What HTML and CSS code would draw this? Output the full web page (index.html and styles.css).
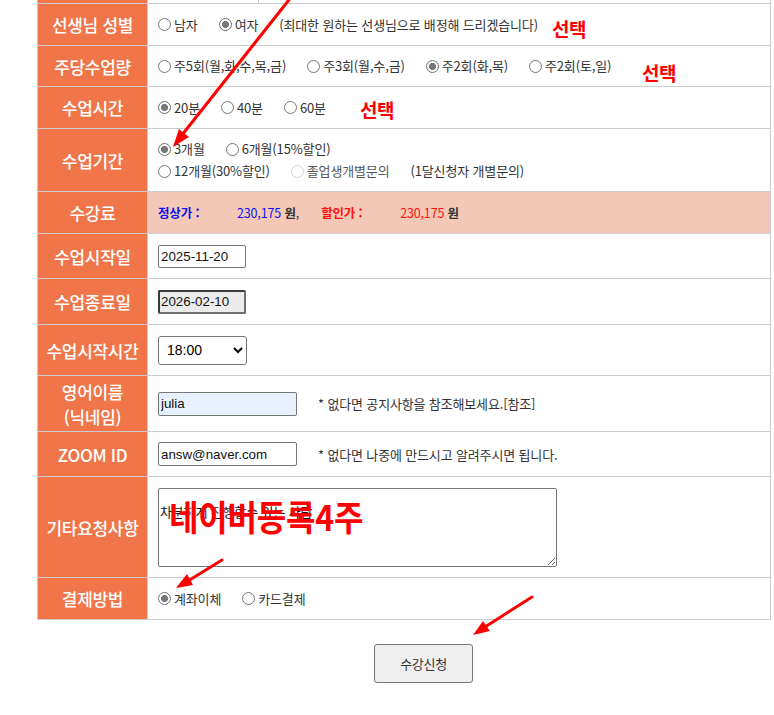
FILE: index.html
```html
<!DOCTYPE html>
<html lang="ko">
<head>
    <meta charset="UTF-8">
    <meta name="viewport" content="width=device-width, initial-scale=1.0">
    <title>수강신청</title>
    <link rel="stylesheet" href="styles.css">
</head>
<body>
    <div class="form-wrap">
        <table class="apply-table">
            <colgroup>
                <col class="col-label">
                <col>
            </colgroup>
            <tr class="row-prev">
                <th class="label"></th>
                <td class="value"><div class="prev-split"></div></td>
            </tr>
            <tr class="row-42">
                <th class="label">선생님 성별</th>
                <td class="value">
                    <div class="opts">
                        <label class="opt"><input type="radio" name="gender">남자</label>
                        <label class="opt"><input type="radio" name="gender" checked>여자</label>
                        <span>(최대한 원하는 선생님으로 배정해 드리겠습니다)</span>
                    </div>
                </td>
            </tr>
            <tr class="row-41">
                <th class="label">주당수업량</th>
                <td class="value">
                    <div class="opts">
                        <label class="opt"><input type="radio" name="week">주5회(월,화,수,목,금)</label>
                        <label class="opt"><input type="radio" name="week">주3회(월,수,금)</label>
                        <label class="opt"><input type="radio" name="week" checked>주2회(화,목)</label>
                        <label class="opt"><input type="radio" name="week">주2회(토,일)</label>
                    </div>
                </td>
            </tr>
            <tr class="row-42">
                <th class="label">수업시간</th>
                <td class="value">
                    <div class="opts">
                        <label class="opt"><input type="radio" name="time" checked>20분</label>
                        <label class="opt"><input type="radio" name="time">40분</label>
                        <label class="opt"><input type="radio" name="time">60분</label>
                    </div>
                </td>
            </tr>
            <tr class="row-63">
                <th class="label">수업기간</th>
                <td class="value">
                    <div class="opts">
                        <label class="opt"><input type="radio" name="period" checked>3개월</label>
                        <label class="opt"><input type="radio" name="period">6개월(15%할인)</label>
                    </div>
                    <div class="opts">
                        <label class="opt"><input type="radio" name="period">12개월(30%할인)</label>
                        <label class="opt opt-off"><input type="radio" name="period" disabled>졸업생개별문의</label>
                        <span>(1달신청자 개별문의)</span>
                    </div>
                </td>
            </tr>
            <tr class="row-42">
                <th class="label">수강료</th>
                <td class="value fee">
                    <b class="fee-name blue">정상가 :</b><span class="blue">230,175</span> <b>원</b>,<b class="fee-name fee-sale red">할인가 :</b><span class="red">230,175</span> <b>원</b>
                </td>
            </tr>
            <tr class="row-45">
                <th class="label">수업시작일</th>
                <td class="value"><input type="text" class="date-input" value="2025-11-20"></td>
            </tr>
            <tr class="row-46">
                <th class="label">수업종료일</th>
                <td class="value"><input type="text" class="date-input date-locked" value="2026-02-10" readonly></td>
            </tr>
            <tr class="row-51">
                <th class="label">수업시작시간</th>
                <td class="value">
                    <select class="time-select">
                        <option>18:00</option>
                        <option>19:00</option>
                        <option>20:00</option>
                    </select>
                </td>
            </tr>
            <tr class="row-56">
                <th class="label label-two">영어이름<br>(닉네임)</th>
                <td class="value">
                    <input type="text" class="text-input filled" value="julia"><span class="note">* 없다면 공지사항을 참조해보세요.[참조]</span>
                </td>
            </tr>
            <tr class="row-45">
                <th class="label">ZOOM ID</th>
                <td class="value">
                    <input type="text" class="text-input" value="answ@naver.com"><span class="note">* 없다면 나중에 만드시고 알려주시면 됩니다.</span>
                </td>
            </tr>
            <tr class="row-101">
                <th class="label">기타요청사항</th>
                <td class="value"><textarea class="memo">차분하게 진행할수 있는 사람</textarea></td>
            </tr>
            <tr class="row-42">
                <th class="label">결제방법</th>
                <td class="value">
                    <div class="opts">
                        <label class="opt"><input type="radio" name="pay" checked>계좌이체</label>
                        <label class="opt"><input type="radio" name="pay">카드결제</label>
                    </div>
                </td>
            </tr>
        </table>
        <div class="submit-area">
            <button type="button" class="submit-btn">수강신청</button>
        </div>
    </div>

    <!-- 캡처 위에 그려진 표시 -->
    <div class="marks">
        <svg class="arrows" width="774" height="715" viewBox="0 0 774 715">
            <g stroke="#ff0000" stroke-width="3" stroke-linecap="round">
                <line x1="292" y1="-4" x2="182" y2="135"/>
                <line x1="222" y1="560" x2="188" y2="581"/>
                <line x1="532" y1="597" x2="485" y2="627"/>
            </g>
            <g fill="#ff0000">
                <polygon points="173,147 189,137 179,129"/>
                <polygon points="176,588 193,585 187,574"/>
                <polygon points="473,635 490,631 483,621"/>
            </g>
        </svg>
        <div class="mark mark-1">선택</div>
        <div class="mark mark-2">선택</div>
        <div class="mark mark-3">선택</div>
        <div class="mark mark-big">네이버등록4주</div>
    </div>
</body>
</html>
```
FILE: styles.css
```css
body {
    margin: 0;
    background-color: #fff;
    font-family: "Noto Sans CJK KR", "Noto Sans", sans-serif;
    color: #333;
    overflow: hidden;
}
.form-wrap {
    margin: -38px 0 0 37px;
    width: 734px;
}
.apply-table {
    width: 734px;
    border-collapse: collapse;
    table-layout: fixed;
    border: 1px solid #ccc;
}
.col-label {
    width: 110px;
}
.apply-table th,
.apply-table td {
    border: 1px solid #ccc;
    padding: 0;
}
.label {
    background-color: #f0764a;
    color: #fff;
    font-size: 17px;
    font-weight: 500;
    letter-spacing: -0.3px;
    text-align: center;
    vertical-align: middle;
}
.label-two {
    line-height: 25px;
}
.value {
    padding: 0 10px !important;
    font-size: 13px;
    letter-spacing: -0.15px;
    vertical-align: middle;
}
.row-prev { height: 40px; }
.row-41 { height: 41px; }
.row-42 { height: 42px; }
.row-45 { height: 45px; }
.row-46 { height: 46px; }
.row-51 { height: 51px; }
.row-56 { height: 56px; }
.row-63 { height: 63px; }
.row-101 { height: 101px; }

.prev-split {
    width: 110px;
    height: 40px;
    border-right: 1px solid #ccc;
    margin-left: -10px;
}

.opts {
    display: flex;
    align-items: center;
    gap: 21px;
    line-height: 22px;
}
.opt {
    display: inline-flex;
    align-items: center;
}
.opt input[type="radio"] {
    appearance: none;
    -webkit-appearance: none;
    width: 13px;
    height: 13px;
    margin: 0 3px 0 0;
    border: 1px solid #767676;
    border-radius: 50%;
    background-color: #fff;
    box-sizing: border-box;
}
.opt input[type="radio"]:checked {
    border-color: #6d6d6d;
    background: radial-gradient(circle, #777 0 3.3px, #fff 3.8px);
}
.opt input[type="radio"]:disabled {
    border-color: #d4d4d4;
}
.opt-off {
    color: #555;
}

/* 수강료 */
.fee {
    background-color: #f4c8b7;
    font-size: 12.5px;
}
.fee b {
    font-weight: 700;
}
.fee-name {
    display: inline-block;
    width: 79px;
}
.fee-sale {
    margin-left: 22px;
}
.blue {
    color: #1010ee;
}
.red {
    color: #ff1010;
}

/* 입력칸 */
.date-input,
.text-input {
    font-family: "Liberation Sans", Arial, sans-serif;
    font-size: 13.333px;
    letter-spacing: 0;
    color: #111;
    height: 23px;
    padding: 1px 2px;
    border: 1px solid #767676;
    border-radius: 2px;
    box-sizing: border-box;
    margin: 0;
    vertical-align: middle;
}
.date-input {
    width: 88px;
}
.date-locked {
    background-color: #ebebeb;
    border: 2px solid #3b3b3b;
    border-bottom-color: #707070;
    border-right-color: #707070;
    padding: 0 1px;
    height: 24px;
}
.text-input {
    width: 139px;
    height: 24px;
}
.filled {
    background-color: #e8f0fe;
}
.note {
    margin-left: 21px;
    vertical-align: middle;
}
.time-select {
    width: 89px;
    height: 29px;
    font-family: "Liberation Sans", Arial, sans-serif;
    font-size: 14px;
    letter-spacing: 0;
    color: #000;
    background-color: #fff;
    border: 1px solid #767676;
    border-radius: 3px;
    padding: 0 4px;
}
.memo {
    display: block;
    width: 399px;
    height: 79px;
    box-sizing: border-box;
    margin: 0;
    padding: 14px 1px 2px;
    border: 1px solid #767676;
    border-radius: 2px;
    font-family: "Noto Sans CJK KR", sans-serif;
    font-size: 13px;
    letter-spacing: -0.15px;
    line-height: 17px;
    color: #111;
    resize: vertical;
}

.submit-area {
    padding: 24px 0 0 337px;
}
.submit-btn {
    width: 99px;
    height: 39px;
    background-color: #efefef;
    border: 1px solid #767676;
    border-radius: 3px;
    font-family: "Noto Sans CJK KR", sans-serif;
    font-size: 13px;
    letter-spacing: -0.3px;
    color: #333;
    cursor: pointer;
}

/* 빨간 표시 */
.marks {
    position: absolute;
    top: 0;
    left: 0;
    width: 774px;
    height: 715px;
    pointer-events: none;
}
.arrows {
    position: absolute;
    top: 0;
    left: 0;
}
.mark {
    position: absolute;
    color: #ff0000;
    font-weight: 700;
    font-size: 19px;
    line-height: 19px;
    letter-spacing: -0.5px;
}
.mark-1 { left: 552px; top: 19px; }
.mark-2 { left: 642px; top: 63px; }
.mark-3 { left: 360px; top: 100px; }
.mark-big {
    left: 169px;
    top: 498px;
    font-size: 32px;
    line-height: 32px;
    letter-spacing: -0.2px;
    transform: scaleY(1.1);
    transform-origin: top left;
}
```
